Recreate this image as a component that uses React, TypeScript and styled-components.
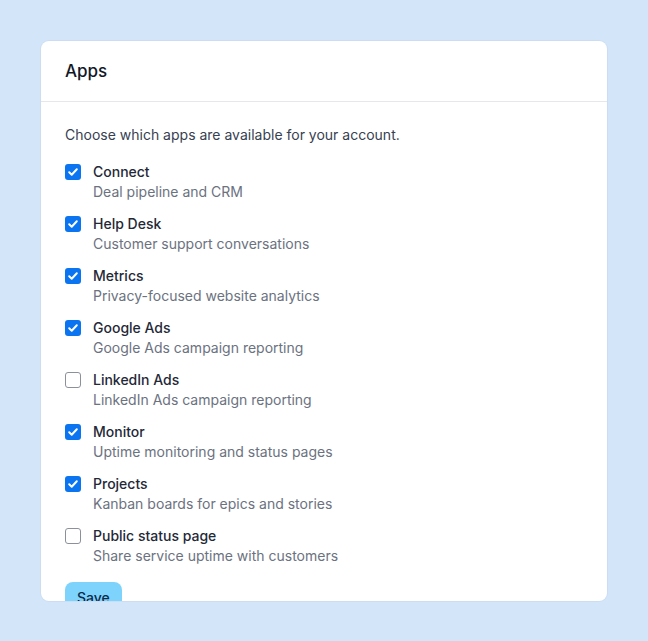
import styled, { createGlobalStyle } from 'styled-components';

const GlobalStyle = createGlobalStyle`
  html, body {
    margin: 0;
    padding: 0;
    background: #d3e5f9;
    font-family: Inter, "Noto Sans", sans-serif;
  }
`;

const Page = styled.div`
  padding: 41px;
  height: 641px;
  box-sizing: border-box;
`;

const Card = styled.div`
  width: 566px;
  height: 560px;
  background: #fff;
  border-radius: 8px;
  overflow: hidden;
  box-shadow: 0 0 0 1px rgba(0, 0, 0, 0.03);
`;

const Header = styled.div`
  height: 60px;
  padding: 0 24px;
  display: flex;
  align-items: center;
  border-bottom: 1px solid #e5e7eb;
  font-size: 17px;
  font-weight: 500;
  color: #111827;
`;

const Body = styled.div`
  padding: 23px 24px 24px;
  display: flex;
  flex-direction: column;
`;

const Intro = styled.p`
  margin: 0 0 17px;
  font-size: 14px;
  line-height: 20px;
  color: #374151;
`;

const List = styled.div`
  display: flex;
  flex-direction: column;
  gap: 12px;
`;

const Row = styled.label`
  display: flex;
  gap: 12px;
  align-items: flex-start;
`;

const Box = styled.span<{ $checked: boolean }>`
  flex: none;
  width: 16px;
  height: 16px;
  margin-top: 2px;
  box-sizing: border-box;
  border-radius: 3px;
  display: flex;
  align-items: center;
  justify-content: center;
  background: ${p => (p.$checked ? '#0b74f0' : '#fff')};
  border: ${p => (p.$checked ? 'none' : '1px solid #8b919c')};
`;

const Text = styled.div`
  display: flex;
  flex-direction: column;
`;

const Name = styled.span`
  font-size: 14px;
  line-height: 20px;
  font-weight: 500;
  color: #1f2937;
`;

const Desc = styled.span`
  font-size: 14px;
  line-height: 20px;
  color: #6b7280;
`;

const SaveButton = styled.button`
  align-self: flex-start;
  margin-top: 16px;
  border: none;
  border-radius: 8px;
  background: #7dd3fc;
  color: #0c2a4a;
  font-family: inherit;
  font-size: 14px;
  font-weight: 500;
  line-height: 20px;
  padding: 6px 12px;
`;

const apps = [
  { name: 'Connect', desc: 'Deal pipeline and CRM', on: true },
  { name: 'Help Desk', desc: 'Customer support conversations', on: true },
  { name: 'Metrics', desc: 'Privacy-focused website analytics', on: true },
  { name: 'Google Ads', desc: 'Google Ads campaign reporting', on: true },
  { name: 'LinkedIn Ads', desc: 'LinkedIn Ads campaign reporting', on: false },
  { name: 'Monitor', desc: 'Uptime monitoring and status pages', on: true },
  { name: 'Projects', desc: 'Kanban boards for epics and stories', on: true },
  { name: 'Public status page', desc: 'Share service uptime with customers', on: false },
];

function Check() {
  return (
    <svg width="12" height="12" viewBox="0 0 12 12">
      <path d="M2.2 6.3l2.5 2.4 5.1-5.4" fill="none" stroke="#fff" strokeWidth="2" strokeLinecap="round" strokeLinejoin="round" />
    </svg>
  );
}

export default function App() {
  return (
    <>
      <GlobalStyle />
      <Page>
        <Card>
          <Header>Apps</Header>
          <Body>
            <Intro>Choose which apps are available for your account.</Intro>
            <List>
              {apps.map(a => (
                <Row key={a.name}>
                  <Box $checked={a.on}>{a.on && <Check />}</Box>
                  <Text>
                    <Name>{a.name}</Name>
                    <Desc>{a.desc}</Desc>
                  </Text>
                </Row>
              ))}
            </List>
            <SaveButton>Save</SaveButton>
          </Body>
        </Card>
      </Page>
    </>
  );
}
